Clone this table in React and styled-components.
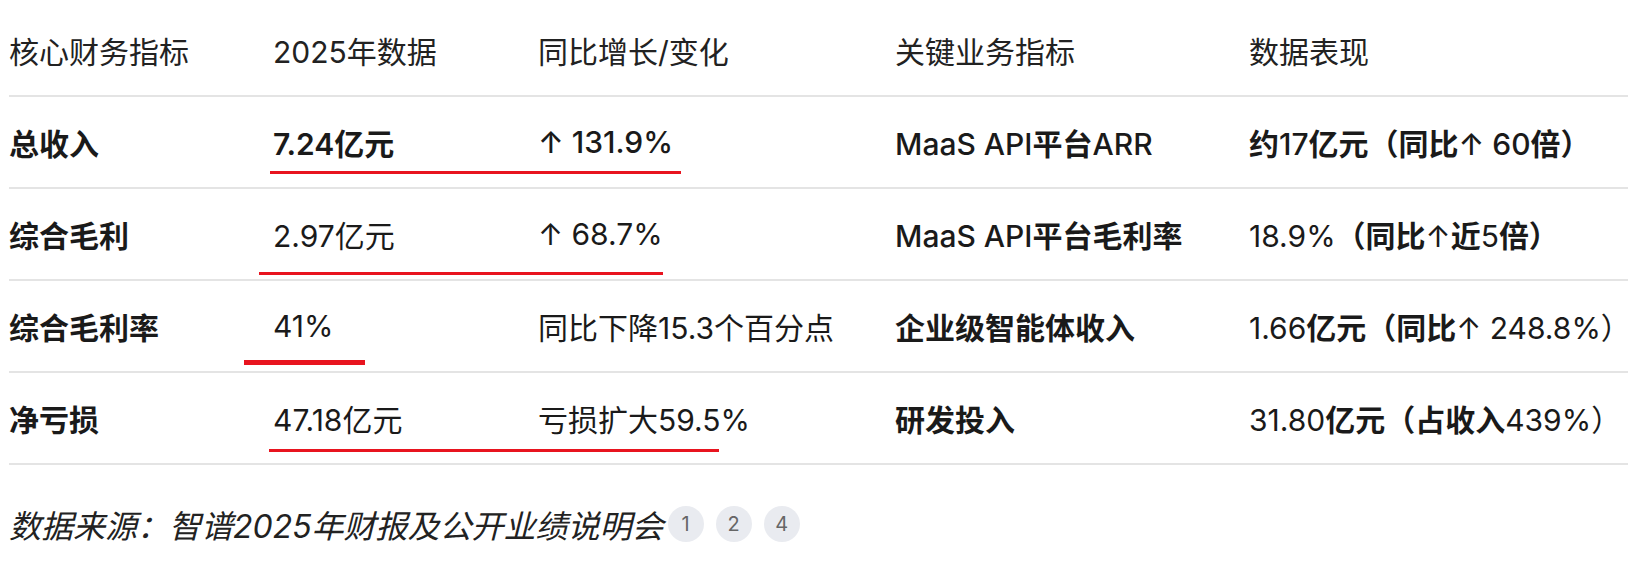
import styled, { createGlobalStyle } from "styled-components";

const Global = createGlobalStyle`
body {
  margin: 0;
  background: #fff;
  font-family: Inter, "Noto Sans CJK SC", sans-serif;
  color: #1a1a1a;
}
`

const Page = styled.div`
padding: 5px 0 0 9px;
`

const Row = styled.div`
position: relative;
display: grid;
grid-template-columns: 264px 265px 357px 354px 1fr;
align-items: center;
height: 90px;
border-bottom: 2px solid #e4e4e4;
font-size: 30px;
`

const Head = styled.div`
font-weight: 400;
color: #222;
white-space: nowrap;
`

const Cell = styled.div`
white-space: nowrap;
font-weight: ${(p) => p.$w || 400};
`

const B = styled.span`
font-weight: 700;
`

const Mark = styled.div`
position: absolute;
left: ${(p) => p.$left}px;
top: ${(p) => p.$top}px;
width: ${(p) => p.$width}px;
height: ${(p) => p.$thick}px;
background: #e8141f;
`

const Footer = styled.div`
display: flex;
align-items: center;
gap: 12px;
margin-top: 39px;
height: 40px;
`

const Source = styled.span`
font-size: 32px;
font-style: italic;
color: #222;
margin-right: -8px;
`

const Badge = styled.span`
display: inline-flex;
align-items: center;
justify-content: center;
width: 36px;
height: 36px;
border-radius: 50%;
background: #e9ebf0;
color: #666;
font-size: 20px;
`

const rows = [
  {
    name: "总收入",
    value: <>7.24<B>亿元</B></>,
    change: "↑ 131.9%",
    w: 600,
    cw: 500,
    key: <>MaaS API<B>平台</B>ARR</>,
    perf: <><B>约</B>17<B>亿元（同比</B>↑ 60<B>倍）</B></>,
    pw: 500,
    mark: { left: 261, width: 411, top: 74, thick: 3 },
  },
  {
    name: "综合毛利",
    value: "2.97亿元",
    change: "↑ 68.7%",
    key: <>MaaS API<B>平台毛利率</B></>,
    perf: <>18.9%<B>（同比</B>↑<B>近</B>5<B>倍）</B></>,
    mark: { left: 250, width: 404, top: 83, thick: 3 },
  },
  {
    name: "综合毛利率",
    value: "41%",
    change: "同比下降15.3个百分点",
    key: <B>企业级智能体收入</B>,
    perf: <>1.66<B>亿元（同比</B>↑ 248.8%）</>,
    mark: { left: 235, width: 121, top: 79, thick: 5 },
  },
  {
    name: "净亏损",
    value: "47.18亿元",
    change: "亏损扩大59.5%",
    key: <B>研发投入</B>,
    perf: <>31.80<B>亿元（占收入</B>439%）</>,
    mark: { left: 260, width: 450, top: 76, thick: 3 },
  },
]

const App = () => {
  return (
    <Page>
      <Global />
      <Row>
        <Head>核心财务指标</Head>
        <Head>2025年数据</Head>
        <Head>同比增长/变化</Head>
        <Head>关键业务指标</Head>
        <Head>数据表现</Head>
      </Row>
      {rows.map((r) => (
        <Row key={r.name}>
          <Cell $w={700}>{r.name}</Cell>
          <Cell $w={r.w}>{r.value}</Cell>
          <Cell $w={r.cw}>{r.change}</Cell>
          <Cell $w={500}>{r.key}</Cell>
          <Cell $w={r.pw}>{r.perf}</Cell>
          <Mark $left={r.mark.left} $top={r.mark.top} $width={r.mark.width} $thick={r.mark.thick} />
        </Row>
      ))}
      <Footer>
        <Source>数据来源：智谱2025年财报及公开业绩说明会</Source>
        <Badge>1</Badge>
        <Badge>2</Badge>
        <Badge>4</Badge>
      </Footer>
    </Page>
  )
}
export default App;
